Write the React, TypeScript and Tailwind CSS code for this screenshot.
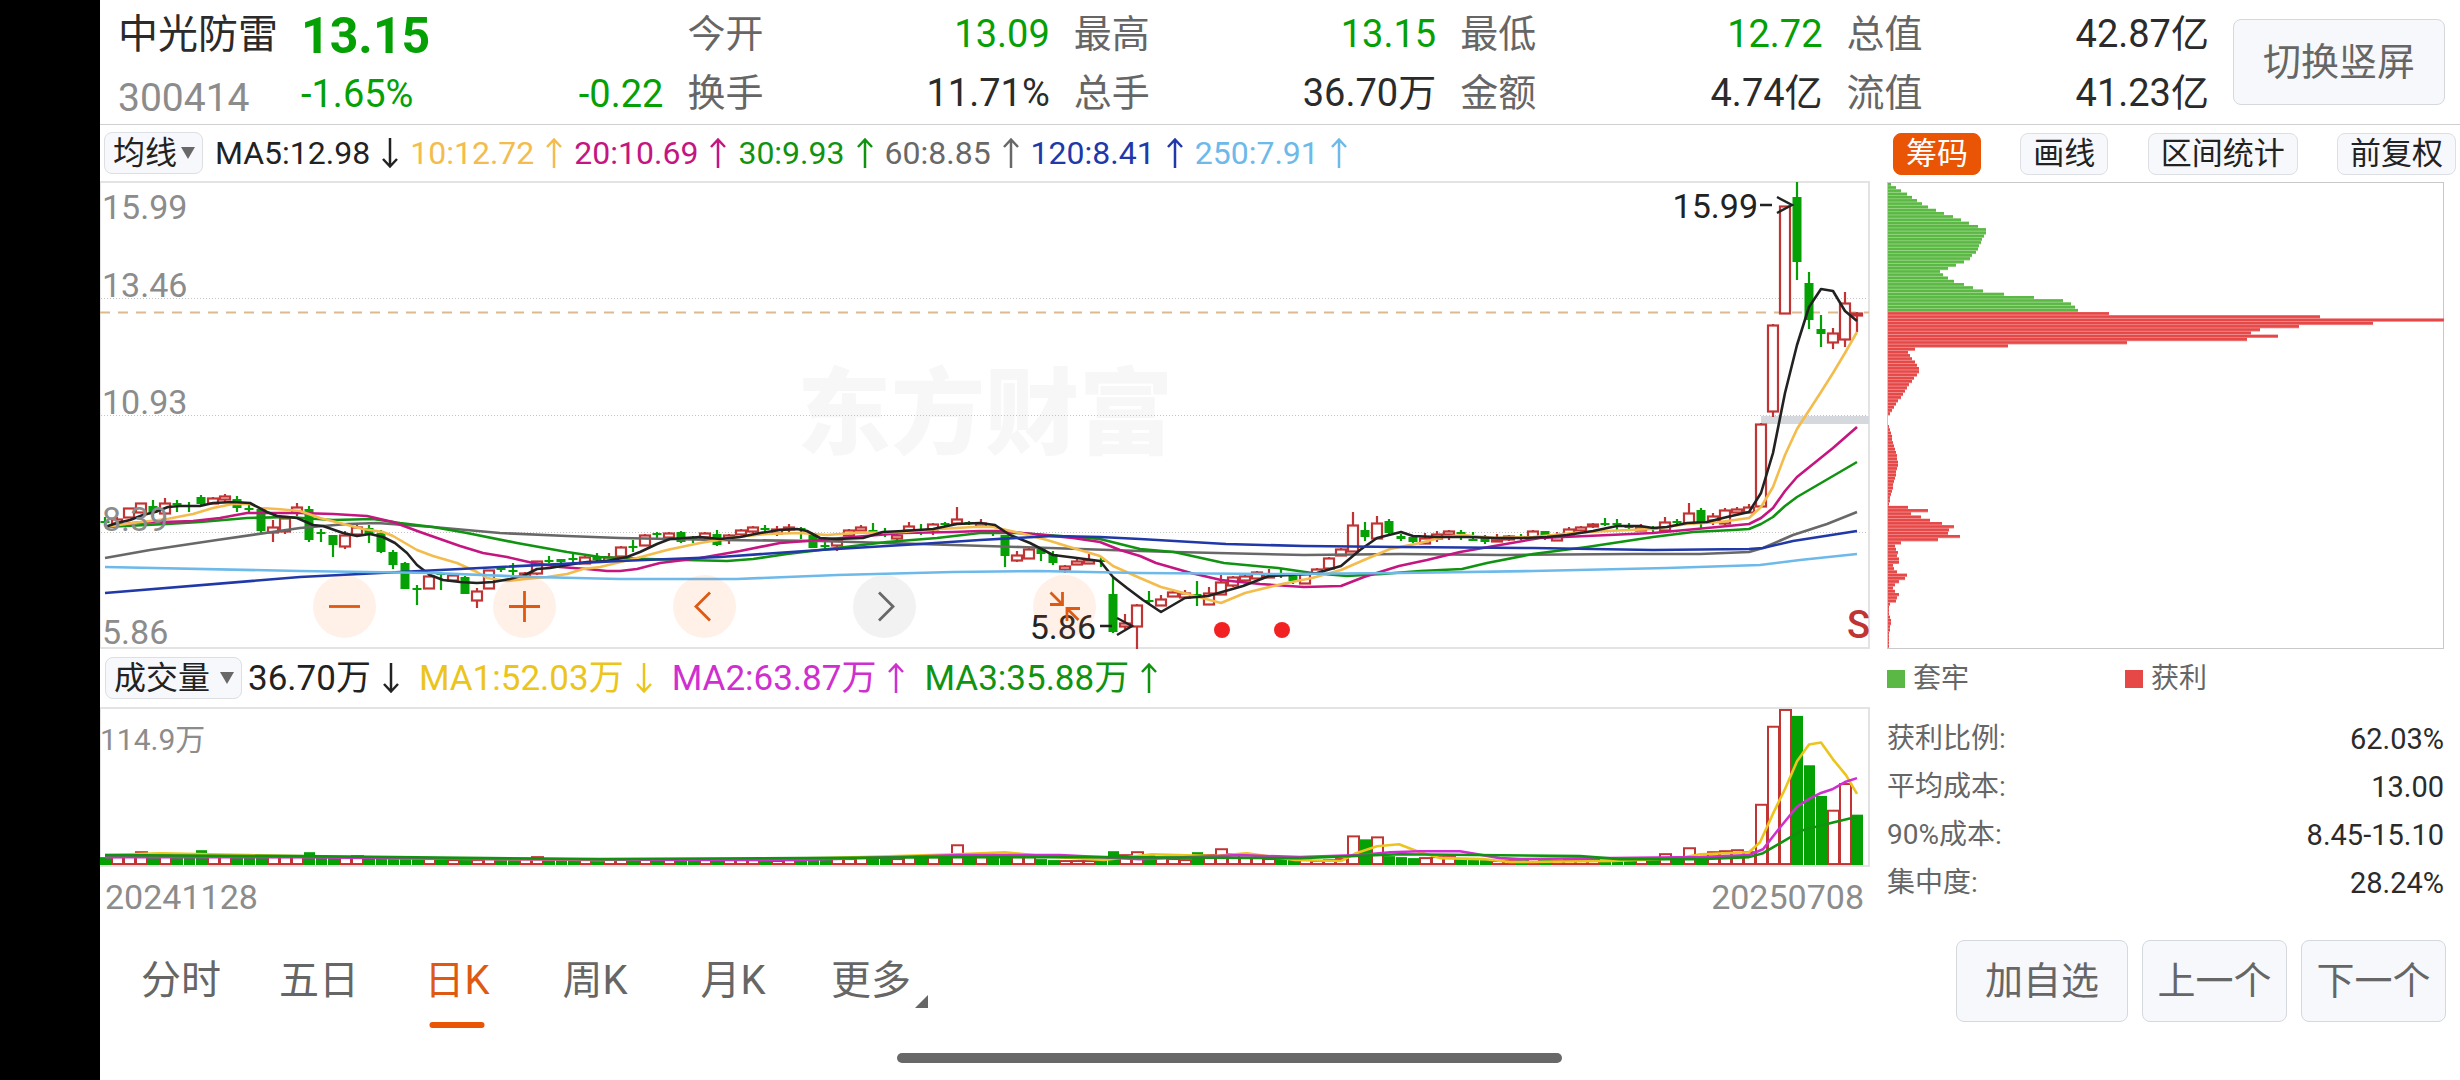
import type { ReactNode } from "react";

const FONT = "font-['Roboto','Noto_Sans_CJK_SC',sans-serif]";

/* ---------- data ---------- */

type Candle = ["r" | "g", number, number, number, number];

// [colour, high, body top, body bottom, low] in plot units (0 = 15.99, 466 = 5.86)
const CANDLES: Candle[] = [
  ["g", 335, 339, 341, 344], ["r", 335, 337, 341, 342], ["r", 326, 326, 335, 335], ["r", 321, 321, 330, 330],
  ["g", 318, 324, 331, 334], ["r", 316, 321, 331, 333], ["g", 318, 321, 323, 330], ["g", 320, 323, 325, 330],
  ["g", 313, 315, 322, 323], ["r", 315, 316, 321, 321], ["r", 312, 314, 317, 320], ["g", 314, 317, 326, 330],
  ["g", 323, 326, 328, 330], ["g", 327, 327, 349, 351], ["r", 338, 345, 350, 360], ["r", 335, 336, 349, 352],
  ["r", 321, 325, 330, 334], ["g", 324, 327, 358, 360], ["g", 347, 350, 352, 360], ["g", 353, 353, 363, 375],
  ["r", 349, 353, 364, 367], ["r", 341, 345, 352, 354], ["g", 343, 346, 352, 361], ["g", 348, 351, 370, 371],
  ["g", 368, 370, 383, 387], ["g", 380, 381, 407, 407], ["g", 403, 406, 408, 423], ["r", 393, 394, 406, 407],
  ["g", 390, 391, 393, 408], ["r", 391, 393, 398, 399], ["g", 394, 395, 412, 412], ["r", 406, 409, 418, 426],
  ["r", 388, 388, 406, 406], ["g", 384, 386, 388, 390], ["g", 381, 388, 390, 394], ["r", 390, 391, 394, 394],
  ["r", 379, 379, 391, 393], ["g", 374, 378, 380, 381], ["g", 377, 377, 380, 381], ["g", 370, 376, 378, 381],
  ["r", 374, 375, 381, 382], ["g", 371, 375, 378, 380], ["r", 371, 375, 378, 380], ["r", 364, 365, 374, 374],
  ["g", 358, 364, 366, 370], ["r", 352, 353, 363, 363], ["g", 350, 351, 353, 357], ["r", 350, 351, 355, 356],
  ["g", 349, 350, 360, 361], ["g", 354, 356, 358, 361], ["r", 350, 351, 355, 358], ["g", 348, 352, 363, 364],
  ["r", 352, 353, 357, 362], ["r", 347, 348, 352, 353], ["r", 344, 345, 349, 351], ["g", 343, 346, 348, 351],
  ["r", 344, 347, 351, 354], ["r", 342, 345, 347, 351], ["g", 345, 346, 348, 357], ["g", 353, 353, 366, 366],
  ["g", 360, 363, 365, 367], ["r", 357, 358, 363, 369], ["r", 347, 348, 353, 353], ["r", 343, 345, 348, 349],
  ["g", 341, 348, 350, 351], ["g", 346, 349, 350, 355], ["r", 350, 353, 356, 360], ["r", 340, 344, 348, 350],
  ["g", 342, 347, 348, 353], ["r", 341, 342, 347, 353], ["g", 340, 341, 343, 345], ["r", 325, 337, 341, 342],
  ["g", 339, 340, 342, 343], ["r", 337, 341, 344, 345], ["g", 348, 350, 351, 354], ["g", 353, 353, 374, 385],
  ["r", 369, 373, 378, 380], ["r", 366, 367, 376, 376], ["g", 366, 367, 372, 379], ["g", 369, 372, 381, 383],
  ["r", 383, 384, 387, 391], ["r", 375, 379, 382, 383], ["r", 372, 378, 381, 382], ["g", 375, 378, 380, 385],
  ["g", 396, 412, 450, 451], ["r", 432, 441, 444, 447], ["r", 422, 423, 444, 467], ["g", 409, 418, 420, 422],
  ["r", 413, 417, 423, 424], ["r", 407, 410, 414, 414], ["r", 408, 411, 415, 416], ["g", 399, 412, 414, 424],
  ["r", 405, 411, 422, 422], ["r", 393, 400, 412, 412], ["r", 394, 395, 403, 405], ["r", 393, 394, 398, 399],
  ["r", 389, 390, 396, 397], ["r", 387, 392, 395, 396], ["g", 387, 391, 393, 396], ["g", 393, 394, 399, 402],
  ["r", 391, 392, 401, 401], ["r", 386, 387, 391, 392], ["r", 375, 376, 386, 386], ["r", 366, 367, 373, 373],
  ["r", 330, 343, 369, 370], ["g", 340, 348, 355, 359], ["r", 334, 341, 356, 356], ["g", 337, 339, 351, 352],
  ["g", 352, 354, 357, 359], ["g", 354, 355, 360, 361], ["r", 351, 356, 361, 361], ["r", 349, 352, 356, 360],
  ["r", 348, 349, 352, 358], ["g", 348, 350, 352, 358], ["g", 350, 357, 359, 359], ["g", 353, 356, 360, 362],
  ["r", 352, 357, 359, 360], ["r", 353, 354, 357, 359], ["g", 352, 355, 356, 358], ["r", 348, 349, 355, 357],
  ["g", 349, 349, 354, 358], ["r", 350, 353, 358, 358], ["r", 345, 347, 352, 352], ["r", 344, 345, 348, 350],
  ["r", 341, 342, 344, 346], ["g", 336, 341, 342, 344], ["g", 337, 341, 343, 348], ["g", 341, 344, 346, 348],
  ["r", 342, 345, 348, 348], ["g", 344, 346, 348, 350], ["r", 335, 340, 348, 350], ["g", 337, 339, 341, 343],
  ["r", 321, 331, 341, 341], ["g", 326, 328, 340, 346], ["r", 331, 334, 338, 343], ["r", 326, 328, 341, 343],
  ["r", 325, 327, 330, 331], ["r", 322, 325, 330, 330], ["r", 241, 242, 324, 324], ["r", 142, 143, 229, 235],
  ["r", 24, 24, 131, 131], ["g", 0, 15, 80, 98], ["g", 90, 101, 138, 147], ["g", 133, 147, 152, 165],
  ["r", 146, 151, 160, 167], ["r", 110, 121, 157, 165], ["r", 130, 131, 133, 150],
];

const VOLUMES: number[] = [
  8, 9, 10, 14, 9, 11, 10, 9, 15, 10, 10, 9, 9, 10, 9, 9, 9, 13, 10, 9, 9, 10, 8, 8, 8, 8, 8, 7, 7, 6, 7, 6, 7,
  6, 6, 7, 9, 6, 6, 6, 6, 6, 7, 7, 6, 7, 5, 6, 6, 5, 6, 6, 6, 6, 6, 5, 5, 6, 6, 7, 6, 7, 7, 8, 7, 7, 7, 10, 8,
  9, 8, 21, 9, 9, 8, 9, 9, 9, 6, 5, 5, 5, 5, 5, 14, 11, 14, 10, 8, 7, 6, 13, 11, 17, 12, 8, 8, 7, 6, 6, 6, 5, 6,
  7, 30, 26, 29, 9, 8, 7, 8, 9, 9, 7, 6, 5, 5, 5, 5, 7, 5, 5, 6, 6, 6, 5, 6, 5, 6, 5, 12, 7, 18, 9, 14, 15, 16,
  14, 62, 141, 158, 151, 101, 70, 56, 83, 51,
];

const PRICE_LINES: { color: string; points: string }[] = [
  {
    color: "#686868",
    points:
      "5,376 50,368 117,358 200,346 247,342 277,341 333,345 400,351 467,354 520,356 620,358 720,359 820,362 920,365 1040,369 1074,370 1204,373 1300,372 1400,373 1533,372 1600,372 1649,370 1663,366 1693,353 1727,342 1757,330",
  },
  {
    color: "#109310",
    points:
      "5,345 67,342 100,340 147,336 187,335 233,338 273,337 300,341 333,345 367,351 417,361 467,370 500,375 520,376 547,377 587,378 627,379 653,377 687,372 737,366 787,360 837,356 880,351 920,351 960,354 1000,357 1020,362 1040,367 1074,370 1124,381 1178,386 1212,391 1247,394 1282,392 1320,389 1362,387 1387,381 1433,372 1487,365 1553,355 1593,350 1633,348 1649,347 1661,342 1673,335 1685,324 1697,315 1733,294 1757,280",
  },
  {
    color: "#c41580",
    points:
      "5,345 33,341 93,339 120,336 147,331 200,331 233,332 267,334 293,340 320,350 360,364 383,371 407,375 433,381 460,385 487,387 507,389 520,389 537,387 560,381 600,376 640,369 680,361 707,359 753,355 803,351 853,350 880,349 897,349 933,352 973,356 1000,360 1020,368 1040,374 1056,381 1091,391 1121,398 1160,402 1204,405 1241,404 1264,395 1299,384 1327,378 1360,370 1400,363 1440,356 1487,354 1553,351 1607,346 1649,342 1661,336 1673,326 1685,309 1697,295 1733,266 1757,245",
  },
  {
    color: "#f3bc4c",
    points:
      "5,345 33,341 67,337 93,332 113,326 133,322 150,322 160,326 177,327 200,329 220,336 240,341 263,347 283,350 293,354 317,368 333,374 357,381 377,390 387,396 407,399 425,397 447,395 467,392 483,387 500,385 537,376 567,368 600,361 637,355 667,352 700,351 727,353 753,351 803,350 840,347 873,345 893,345 920,351 947,358 973,366 1000,374 1013,384 1040,396 1061,405 1095,414 1121,421 1145,411 1182,402 1212,396 1241,388 1264,378 1290,367 1320,361 1343,355 1363,353 1393,356 1433,355 1473,351 1507,349 1553,347 1587,342 1620,340 1649,336 1661,325 1673,305 1685,273 1697,247 1721,210 1733,191 1745,171 1757,150",
  },
  {
    color: "#222222",
    points:
      "5,345 17,341 30,338 43,333 55,330 68,325 80,324 100,324 113,321 133,320 150,321 167,330 177,334 197,336 213,343 223,344 243,351 257,354 270,352 283,355 295,361 307,371 317,383 330,393 343,398 360,400 377,401 393,400 410,397 425,393 437,387 450,386 467,383 487,380 507,379 527,375 540,370 557,362 570,357 600,355 620,357 640,355 660,351 680,348 697,347 707,349 720,356 737,357 763,356 783,350 803,349 833,347 857,342 880,341 895,343 910,353 930,361 953,373 977,376 1000,379 1013,395 1027,406 1043,418 1061,430 1085,416 1108,414 1143,404 1169,394 1191,393 1217,391 1241,384 1260,368 1277,356 1301,350 1313,354 1337,355 1367,355 1397,356 1423,356 1447,355 1467,353 1493,349 1517,344 1540,344 1553,346 1567,345 1587,341 1607,340 1627,335 1649,330 1661,311 1673,271 1685,211 1697,163 1709,125 1721,107 1733,109 1745,129 1757,139",
  },
  {
    color: "#2038a8",
    points:
      "5,411 200,395 300,390 400,385 520,379 620,375 720,368 820,362 880,358 953,354 1000,355 1040,357 1126,362 1204,364 1300,365 1433,366 1553,368 1649,367 1663,366 1693,359 1757,349",
  },
  {
    color: "#6cb9ea",
    points:
      "5,385 200,389 333,391 433,395 520,397 637,397 737,393 853,390 937,389 1040,391 1178,392 1300,391 1433,389 1567,386 1660,383 1700,378 1757,372",
  },
];

const VOLUME_LINES: { color: string; points: string }[] = [
  {
    color: "#ecc51c",
    points:
      "5,149 60,147 150,149 300,152 500,154 727,152 857,148 905,146 943,150 1004,154 1052,148 1113,150 1147,147 1195,154 1241,155 1256,147 1277,140 1299,138 1320,146 1340,152 1383,153 1410,156 1513,155 1580,152 1600,148 1649,146 1660,136 1673,107 1685,82 1697,54 1709,37 1721,35 1733,52 1746,68 1757,87",
  },
  {
    color: "#d02fd0",
    points:
      "5,151 200,151 400,153 700,154 860,149 960,149 1040,153 1140,149 1200,151 1260,149 1290,146 1320,145 1360,145 1400,152 1420,153 1600,151 1649,149 1663,143 1680,121 1697,100 1709,92 1721,86 1733,82 1745,75 1757,71",
  },
  {
    color: "#109310",
    points:
      "5,149 200,150 500,153 860,151 1000,151 1200,152 1300,148 1480,150 1520,153 1600,153 1649,151 1663,147 1685,134 1702,124 1713,121 1733,116 1757,110",
  },
];

const TRAPPED: number[] = [
  3, 8, 13, 19, 24, 29, 34, 40, 48, 56, 65, 73, 81, 90, 98, 98, 96, 94, 93, 91, 90, 88, 84, 82, 76, 68, 60, 52, 55,
  60, 66, 76, 85, 95, 116, 146, 175, 183, 187, 190,
];

const PROFITABLE: number[] = [
  221, 432, 556, 485, 411, 372, 363, 390, 359, 239, 120, 27, 20, 22, 24, 27, 29, 31, 31, 29, 26, 24, 21, 19, 17, 15,
  13, 10, 8, 6, 4, 2, 0, 0, 0, 1, 2, 3, 4, 4, 5, 6, 7, 8, 9, 9, 10, 10, 9, 8, 8, 7, 6, 5, 5, 4, 3, 2, 2, 1, 20, 40,
  23, 33, 42, 54, 66, 61, 60, 72, 50, 13, 7, 8, 10, 9, 11, 11, 5, 6, 9, 19, 17, 11, 7, 5, 7, 11, 9, 8, 2, 1, 1, 1, 2,
  3, 3, 2, 2, 1, 1, 1, 1, 1,
];

const STATS: { label: string; value: string; down?: boolean }[] = [
  { label: "今开", value: "13.09", down: true },
  { label: "最高", value: "13.15", down: true },
  { label: "最低", value: "12.72", down: true },
  { label: "总值", value: "42.87亿" },
  { label: "换手", value: "11.71%" },
  { label: "总手", value: "36.70万" },
  { label: "金额", value: "4.74亿" },
  { label: "流值", value: "41.23亿" },
];

const COSTS = [
  ["获利比例", "62.03%"],
  ["平均成本", "13.00"],
  ["90%成本", "8.45-15.10"],
  ["集中度", "28.24%"],
];

/* ---------- small parts ---------- */

function TrendArrow({ up }: { up?: boolean }) {
  return (
    <svg width="16" height="32" viewBox="0 0 16 32" fill="none" stroke="currentColor" strokeWidth="2.5" aria-hidden="true">
      {up ? <path d="M8 31V2M1 10L8 2.5L15 10" /> : <path d="M8 1V30M1 22L8 29.5L15 22" />}
    </svg>
  );
}

function Legend({ color, up, children }: { color: string; up?: boolean; children: ReactNode }) {
  return (
    <span className={`flex items-center gap-3 ${color}`}>
      {children}
      <TrendArrow up={up} />
    </span>
  );
}

function IndicatorSelect({ label, option, className }: { label: string; option: string; className: string }) {
  return (
    <span className={`relative h-[42px] shrink-0 ${className}`}>
      <select
        aria-label={label}
        className="h-full w-full appearance-none rounded-lg border border-[#dcdfe3] bg-[#f6f8fb] pl-2 text-[32px] leading-[38px] text-[#222]"
      >
        <option>{option}</option>
      </select>
      <svg width="14" height="12" viewBox="0 0 14 12" className="pointer-events-none absolute top-[15px] right-2" aria-hidden="true">
        <path d="M0 0H14L7 12Z" fill="#686868" />
      </svg>
    </span>
  );
}

function ToolButton({ active, children }: { active?: boolean; children: ReactNode }) {
  return (
    <button
      type="button"
      className={`flex h-[42px] items-center rounded-lg border px-3 text-[31px] leading-none ${
        active ? "border-[#e95504] bg-[#e95504] text-white" : "border-[#dcdfe3] bg-[#f6f8fb] text-[#222]"
      }`}
    >
      {children}
    </button>
  );
}

function RoundButton({ label, muted, children }: { label: string; muted?: boolean; children: ReactNode }) {
  return (
    <button
      type="button"
      aria-label={label}
      className={`h-[63px] w-[63px] rounded-full ${muted ? "bg-[#f2f2f2] text-[#686868]" : "bg-[#ff6a1f]/10 text-[#de5a12]"}`}
    >
      <svg width="63" height="63" viewBox="0 0 63 63" fill="none" stroke="currentColor" strokeWidth="2.8" aria-hidden="true">
        {children}
      </svg>
    </button>
  );
}

function ActionButton({ className, children }: { className: string; children: ReactNode }) {
  return (
    <button
      type="button"
      className={`flex items-center justify-center rounded-lg border border-[#d5d8dd] bg-[#f6f8fb] text-[38px] leading-none text-[#666] ${className}`}
    >
      {children}
    </button>
  );
}

/* ---------- charts ---------- */

const GREEN = "#04a004";
const RED = "#c03434";

function PriceChart() {
  return (
    <svg viewBox="0 -1 1770 468" preserveAspectRatio="none" className="block h-full w-full" role="img" aria-label="日K线图">
      <path d="M0 0H1769V466H0" fill="none" stroke="#e3e3e3" strokeWidth="2" />
      <path d="M0.500 0V466" stroke="#e3e3e3" />
      {[116.5, 233.5, 350.5].map((y) => (
        <path key={y} d={`M1 ${y}H1768`} stroke="#c4c4c4" strokeDasharray="1 2" />
      ))}
      <rect x="1661" y="234" width="108" height="8" fill="#d5d8dd" />
      <path d="M0 130.500H1769" stroke="#dcb98f" strokeWidth="1.800" strokeDasharray="10 8" />
      {CANDLES.map(([kind, high, top, bottom, low], i) => {
        const x = 5 + i * 12;
        const color = kind === "g" ? GREEN : RED;
        return (
          <g key={i}>
            <path d={`M${x} ${high}V${top}M${x} ${bottom}V${low}`} stroke={color} strokeWidth="2.200" />
            {kind === "g" ? (
              <rect x={x - 4.5} y={top} width="9" height={Math.max(2, bottom - top)} fill={color} />
            ) : (
              <rect x={x - 5} y={top + 0.5} width="10" height={Math.max(1, bottom - top)} fill="#fff" stroke={color} strokeWidth="2.200" />
            )}
          </g>
        );
      })}
      {PRICE_LINES.map((line) => (
        <polyline key={line.color} points={line.points} fill="none" stroke={line.color} strokeWidth="2.600" strokeLinejoin="round" />
      ))}
      <circle cx="1122" cy="448" r="8" fill="#f32222" />
      <circle cx="1182" cy="448" r="8" fill="#f32222" />
      <g fill="none" stroke="#222" strokeWidth="2.400">
        <path d="M1660 23H1672M1677 15L1692 23L1677 31" />
        <path d="M1000 444H1012M1017 436L1032 444L1017 453" />
      </g>
    </svg>
  );
}

function VolumeChart() {
  return (
    <svg viewBox="0 -1 1770 162" preserveAspectRatio="none" className="block h-full w-full" role="img" aria-label="成交量图">
      <path d="M0 0H1769V160H0" fill="none" stroke="#e3e3e3" strokeWidth="2" />
      <path d="M0.500 0V160" stroke="#e3e3e3" />
      {VOLUMES.map((v, i) => {
        const x = 5 + i * 12;
        return CANDLES[i][0] === "g" || i === 146 ? (
          <rect key={i} x={x - 5} y={159 - v} width="11" height={v} fill={GREEN} />
        ) : (
          <rect key={i} x={x - 5} y={160 - v} width="11" height={v - 2} fill="#fff" stroke={RED} strokeWidth="2" />
        );
      })}
      {VOLUME_LINES.map((line) => (
        <polyline key={line.color} points={line.points} fill="none" stroke={line.color} strokeWidth="2.600" strokeLinejoin="round" />
      ))}
    </svg>
  );
}

function ChipChart() {
  const rows = [...TRAPPED, ...PROFITABLE];
  const step = 465 / 144;
  return (
    <svg viewBox="0 0 557 467" preserveAspectRatio="none" className="block h-[467px] w-full" role="img" aria-label="筹码分布图">
      <rect x="0.500" y="0.500" width="556" height="466" fill="none" stroke="#c9c9c9" />
      {rows.map((w, i) => {
        const trapped = i < TRAPPED.length;
        return (
          <g key={i}>
            <rect x="1" y={1 + i * step} width={w} height={step} fill={trapped ? "#93d37f" : "#f08a8a"} />
            <rect x="1" y={1 + i * step} width={w} height={step - 0.8} fill={trapped ? "#5bb845" : "#e64848"} />
          </g>
        );
      })}
    </svg>
  );
}

/* ---------- page ---------- */

function QuoteHeader() {
  return (
    <header className="flex h-[125px] items-start border-b border-[#d0d0d0] pt-[5px] pr-[15px] pl-[18px]">
      <div className="w-[183px] shrink-0">
        <h1 className="h-[60px] text-[40px] leading-[60px] text-[#2b2b2b]">中光防雷</h1>
        <p className="text-[39px] leading-[66px] text-[#8c8c8c]">300414</p>
      </div>
      <div className="grid flex-1 grid-cols-5 gap-x-6 text-[38px] leading-[58px]">
        <div className="col-start-1 row-span-2 row-start-1 text-[#04a004]">
          <p className="h-[60px] text-[50px] leading-[62px] font-bold">13.15</p>
          <p className="flex justify-between">
            <span>-1.65%</span>
            <span>-0.22</span>
          </p>
        </div>
        {STATS.map((s) => (
          <dl key={s.label} className="flex justify-between">
            <dt className="text-[#666]">{s.label}</dt>
            <dd className={s.down ? "text-[#04a004]" : "text-[#2b2b2b]"}>{s.value}</dd>
          </dl>
        ))}
      </div>
      <ActionButton className="mt-[14px] ml-6 h-[86px] w-[212px] shrink-0">切换竖屏</ActionButton>
    </header>
  );
}

const PRICE_LABELS = [
  { text: "15.99", pos: "top-[6px]" },
  { text: "13.46", pos: "top-[84px]" },
  { text: "10.93", pos: "top-[201px]" },
  { text: "8.39", pos: "top-[318px]" },
  { text: "5.86", pos: "top-[431px]" },
];

function ChartColumn() {
  return (
    <section className="min-w-0">
      <div className="flex h-14 items-center gap-3 pl-1 text-[32px] leading-none whitespace-nowrap">
        <IndicatorSelect label="均线" option="均线" className="w-[99px]" />
        <Legend color="text-[#222]">MA5:12.98</Legend>
        <Legend color="text-[#f3bc4c]" up>10:12.72</Legend>
        <Legend color="text-[#c41580]" up>20:10.69</Legend>
        <Legend color="text-[#109310]" up>30:9.93</Legend>
        <Legend color="text-[#686868]" up>60:8.85</Legend>
        <Legend color="text-[#2038a8]" up>120:8.41</Legend>
        <Legend color="text-[#6cb9ea]" up>250:7.91</Legend>
      </div>

      <div className="relative h-[468px] text-[34px] leading-10">
        <div className="absolute inset-0 flex items-center justify-center text-[94px] leading-none font-black text-[#f7f7f7]">
          东方财富
        </div>
        <div className="absolute inset-0">
          <PriceChart />
        </div>
        {PRICE_LABELS.map((l) => (
          <span key={l.text} className={`absolute left-[2px] text-[#8c8c8c] ${l.pos}`}>
            {l.text}
          </span>
        ))}
        <span className="absolute top-[5px] right-[112px] text-[#222]">15.99</span>
        <span className="absolute top-[426px] right-[774px] text-[#222]">5.86</span>
        <span className="absolute top-[424px] right-0 text-[38px] font-medium text-[#c03434]">S</span>
        <div className="absolute top-[394px] left-[213px] flex gap-[117px]">
          <RoundButton label="缩小">
            <path d="M16 31.500H47" />
          </RoundButton>
          <RoundButton label="放大">
            <path d="M16 31.500H47M31.500 16V47" />
          </RoundButton>
          <RoundButton label="向左">
            <path d="M37 17.500L23 31.500L37 45.500" />
          </RoundButton>
          <RoundButton label="向右" muted>
            <path d="M26 17.500L40 31.500L26 45.500" />
          </RoundButton>
          <RoundButton label="收起">
            <path d="M17.500 17.500L29 29M17 29.500H29.500V17M45.500 45L34.500 34M47 33.500H34V46" />
          </RoundButton>
        </div>
      </div>

      <div className="flex h-[58px] items-center gap-5 pl-[5px] text-[35px] leading-none whitespace-nowrap">
        <div className="flex items-center gap-[6px]">
          <IndicatorSelect label="副图指标" option="成交量" className="w-[137px]" />
          <Legend color="text-[#222]">36.70万</Legend>
        </div>
        <Legend color="text-[#ecc51c]">MA1:52.03万</Legend>
        <Legend color="text-[#d02fd0]" up>MA2:63.87万</Legend>
        <Legend color="text-[#109310]" up>MA3:35.88万</Legend>
      </div>

      <div className="relative h-[160px]">
        <VolumeChart />
        <span className="absolute top-[13px] left-0 text-[30px] leading-10 text-[#8c8c8c]">114.9万</span>
      </div>
      <div className="flex justify-between pr-[6px] pl-[5px] text-[34px] leading-[60px] text-[#8c8c8c]">
        <time>20241128</time>
        <time>20250708</time>
      </div>
    </section>
  );
}

function ChipColumn() {
  return (
    <aside>
      <div className="flex h-[57px] items-center justify-between pr-1 pl-[23px]">
        <ToolButton active>筹码</ToolButton>
        <ToolButton>画线</ToolButton>
        <ToolButton>区间统计</ToolButton>
        <ToolButton>前复权</ToolButton>
      </div>
      <div className="pr-4 pl-[17px] text-[28px] text-[#666]">
        <ChipChart />
        <div className="flex h-[60px] items-center leading-none">
          <span className="flex w-[238px] items-center gap-2">
            <i className="h-[18px] w-[18px] bg-[#5bb845]" />
            套牢
          </span>
          <span className="flex items-center gap-2">
            <i className="h-[18px] w-[18px] bg-[#e64848]" />
            获利
          </span>
        </div>
        <dl className="pt-[6px]">
          {COSTS.map(([name, value]) => (
            <div key={name} className="flex justify-between leading-[48px]">
              <dt>{name}:</dt>
              <dd className="text-[29px] text-[#2b2b2b]">{value}</dd>
            </div>
          ))}
        </dl>
      </div>
    </aside>
  );
}

const TABS = ["分时", "五日", "日K", "周K", "月K", "更多"];

function BottomBar() {
  return (
    <footer className="flex h-[108px] items-center justify-between px-[14px]">
      <nav className="-ml-[2px] flex h-full text-[40px] leading-none text-[#666]">
        {TABS.map((tab) => {
          const active = tab === "日K";
          return (
            <button key={tab} type="button" className={`relative h-full w-[138px] ${active ? "text-[#de5a12]" : ""}`}>
              {tab}
              {active && (
                <span className="absolute bottom-[7px] left-1/2 h-[6px] w-[55px] -translate-x-1/2 rounded-full bg-[#e95504]" />
              )}
              {tab === "更多" && (
                <svg width="13" height="13" viewBox="0 0 13 13" className="absolute right-3 bottom-[27px]" aria-hidden="true">
                  <path d="M13 0V13H0Z" fill="#666" />
                </svg>
              )}
            </button>
          );
        })}
      </nav>
      <div className="flex gap-[14px]">
        <ActionButton className="h-[82px] w-[172px]">加自选</ActionButton>
        <ActionButton className="h-[82px] w-[145px]">上一个</ActionButton>
        <ActionButton className="h-[82px] w-[145px]">下一个</ActionButton>
      </div>
    </footer>
  );
}

export default function App() {
  return (
    <div className={`flex min-h-screen bg-black ${FONT}`}>
      <main className="ml-[100px] min-w-0 flex-1 bg-white">
        <QuoteHeader />
        <div className="grid grid-cols-[1fr_590px]">
          <ChartColumn />
          <ChipColumn />
        </div>
        <BottomBar />
        <div className="pt-[18px] pr-[102px]">
          <div className="mx-auto h-[10px] w-[665px] rounded-full bg-[#686868]" />
        </div>
      </main>
    </div>
  );
}
